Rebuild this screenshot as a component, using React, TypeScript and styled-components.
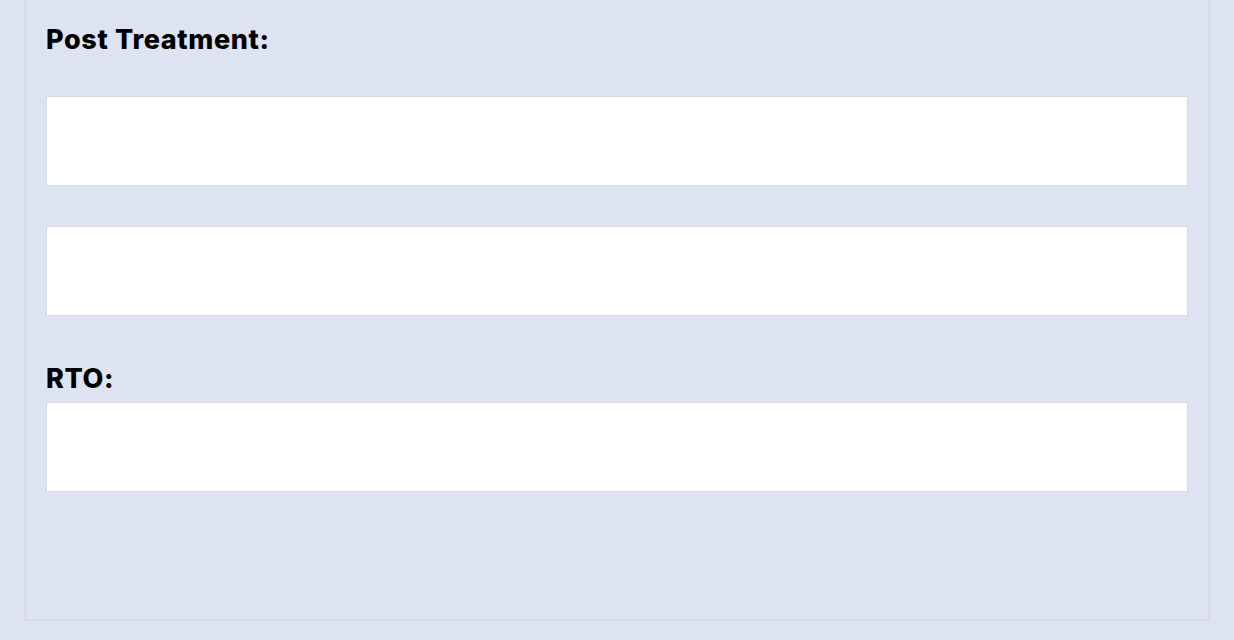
import styled, { createGlobalStyle } from 'styled-components'

const GlobalStyle = createGlobalStyle`
  html, body {
    margin: 0;
    padding: 0;
    background: #dde3f1;
    font-family: Inter, "Noto Sans", sans-serif;
  }
`

const Page = styled.div`
  padding: 0 24px 19px;
`

const Panel = styled.section`
  border: 2px solid #d8dbdf;
  border-top: none;
  padding: 24px 20px 127px;
  display: flex;
  flex-direction: column;
`

const Label = styled.h3<{ $spaced?: boolean }>`
  margin: ${(p) => (p.$spaced ? '47px 0 7px' : '0 0 40px')};
  font-size: 27px;
  font-weight: 800;
  color: #000;
  line-height: 32px;
  letter-spacing: 0.65px;
`

const Field = styled.textarea`
  display: block;
  box-sizing: border-box;
  width: 100%;
  height: 90px;
  margin: 0;
  border: 1px solid #d6d9de;
  background: #fff;
  resize: none;
  outline: none;
  & + & {
    margin-top: 40px;
  }
`

export default function App() {
  return (
    <>
      <GlobalStyle />
      <Page>
        <Panel>
          <Label>Post Treatment:</Label>
          <Field />
          <Field />
          <Label $spaced>RTO:</Label>
          <Field />
        </Panel>
      </Page>
    </>
  )
}
